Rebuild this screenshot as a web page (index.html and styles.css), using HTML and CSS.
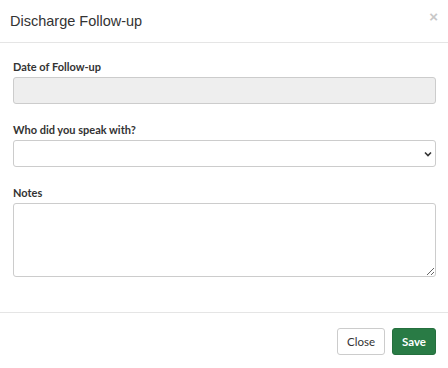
FILE: index.html
```html
<!DOCTYPE html>
<html>
<head>
<meta charset="utf-8">
<link rel="stylesheet" href="styles.css">
</head>
<body>
<div class="modal">
  <div class="modal-header">
    <h4 class="modal-title">Discharge Follow-up</h4>
    <span class="close">&times;</span>
  </div>
  <div class="modal-body">
    <div class="form-group">
      <label class="label">Date of Follow-up</label>
      <input class="control readonly" type="text" readonly>
    </div>
    <div class="form-group">
      <label class="label">Who did you speak with?</label>
      <div class="select-wrap">
        <select class="control select"><option></option></select>
        <svg class="chevron" width="8" height="6" viewBox="0 0 8 6"><path d="M1 1.5 L4 4.5 L7 1.5" fill="none" stroke="#333" stroke-width="1.6"/></svg>
      </div>
    </div>
    <div class="form-group">
      <label class="label">Notes</label>
      <textarea class="control textarea"></textarea>
    </div>
  </div>
  <div class="modal-footer">
    <button class="btn btn-default">Close</button>
    <button class="btn btn-save">Save</button>
  </div>
</div>
</body>
</html>
```

FILE: styles.css
```css
* { box-sizing: border-box; }
html, body { margin: 0; padding: 0; background: #fff; }
body { font-family: Lato, "Open Sans", sans-serif; color: #333; }
.modal { width: 448px; height: 368px; background: #fff; }
.modal-header {
  position: relative;
  height: 43px;
  padding: 11px 10px;
  border-bottom: 1px solid #e5e5e5;
}
.modal-title {
  margin: 0;
  font-family: "Liberation Sans", Arial, sans-serif;
  font-weight: normal;
  font-size: 14.5px;
  line-height: 20px;
  color: #333;
}
.close {
  position: absolute;
  right: 10px;
  top: 9px;
  font-family: "Liberation Sans", Arial, sans-serif;
  font-size: 15px;
  font-weight: bold;
  line-height: 16px;
  color: #c8c8c8;
}
.modal-body { padding: 15px 12px 0 13px; height: 270px; border-bottom: 1px solid #e5e5e5; }
.form-group { margin-bottom: 17px; }
.label {
  display: block;
  font-size: 11px;
  font-weight: 700;
  line-height: 18px;
  margin-bottom: 1px;
  color: #333;
}
.control {
  display: block;
  width: 100%;
  height: 27px;
  border: 1px solid #ccc;
  border-radius: 3px;
  background: #fff;
  font-family: inherit;
  font-size: 12px;
  margin: 0;
  padding: 4px 8px;
  outline: none;
}
.readonly { background: #eee; }
.select-wrap { position: relative; height: 27px; margin-top: 1px; }
.select { appearance: none; -webkit-appearance: none; }
.chevron { position: absolute; right: 4px; top: 11px; }
.textarea { height: 74px; resize: vertical; }
.modal-footer {
  display: flex;
  justify-content: flex-end;
  gap: 7px;
  padding: 15px 12px 14px 12px;
}
.btn {
  height: 27px;
  padding: 0 9px;
  font-family: Lato, sans-serif;
  font-size: 11.5px;
  border-radius: 3px;
  border: 1px solid #ccc;
  background: #fff;
  color: #333;
}
.btn-save {
  padding: 0 9px;
  background: #297b45;
  border-color: #256f3e;
  color: #fff;
  font-weight: 700;
}
```
